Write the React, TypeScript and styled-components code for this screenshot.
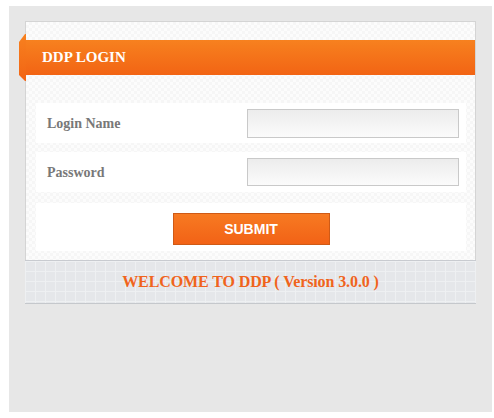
import React from "react";
import styled, { createGlobalStyle } from "styled-components";

const Global = createGlobalStyle`
  html, body { margin: 0; padding: 0; background: #ffffff; }
  body { font-family: "Liberation Serif", "Times New Roman", serif; }
`;

const Page = styled.div`
  padding: 6px 0 0 9px;
`;

const Backdrop = styled.div`
  width: 483px;
  height: 406px;
  background: #e7e7e7;
  padding: 15px 0 0 16px;
  box-sizing: border-box;
`;

const Panel = styled.div`
  width: 451px;
  box-sizing: border-box;
  border: 1px solid #d4d4d4;
  border-bottom: none;
  background-color: #fcfcfc;
  background-image:
    linear-gradient(45deg, #f6f6f6 25%, transparent 25%, transparent 75%, #f6f6f6 75%),
    linear-gradient(45deg, #f6f6f6 25%, transparent 25%, transparent 75%, #f6f6f6 75%);
  background-size: 6px 6px;
  background-position: 0 0, 3px 3px;
  padding-top: 18px;
`;

const Header = styled.div`
  position: relative;
  height: 35px;
  display: flex;
  align-items: center;
  padding-left: 16px;
  background: linear-gradient(#f7811f, #f26414);
  color: #ffffff;
  font-weight: bold;
  font-size: 15px;
  &::before {
    content: "";
    position: absolute;
    left: -7px;
    top: -6px;
    width: 7px;
    height: 47px;
    background: linear-gradient(#f7811f, #f26414);
    clip-path: polygon(0 8px, 6px 0, 7px 0, 7px 100%, 6px 100%, 0 calc(100% - 6px));
  }
`;

const Form = styled.div`
  display: flex;
  flex-direction: column;
  padding: 28px 9px 0 10px;
`;

const Row = styled.div<{ $h: number; $gap: number }>`
  height: ${(p) => p.$h}px;
  margin-bottom: ${(p) => p.$gap}px;
  background: #ffffff;
  display: flex;
  align-items: center;
  justify-content: space-between;
  padding: 0 7px 0 11px;
`;

const ButtonRow = styled(Row)`
  justify-content: center;
  align-items: flex-start;
  padding: 10px 0 0 0;
  box-sizing: border-box;
`;

const Label = styled.label`
  font-weight: bold;
  font-size: 14px;
  color: #787878;
  padding-top: 2px;
`;

const Input = styled.input<{ $h: number }>`
  width: 212px;
  height: ${(p) => p.$h}px;
  box-sizing: border-box;
  border: 1px solid #c9c9c9;
  background: linear-gradient(#ececec, #fbfbfb);
  outline: none;
  padding: 0 4px;
`;

const Submit = styled.button`
  width: 157px;
  height: 32px;
  box-sizing: border-box;
  border: 1px solid #cf5a16;
  background: linear-gradient(#f77a22, #f26216);
  color: #ffffff;
  font-family: "Liberation Sans", Arial, sans-serif;
  font-weight: bold;
  font-size: 14px;
  cursor: pointer;
  padding: 0;
`;

const Footer = styled.div`
  margin: 0 -1px;
  height: 44px;
  box-sizing: border-box;
  border-top: 1px solid #c8cbd0;
  border-bottom: 1px solid #c5c8cc;
  background-color: #e5e7ea;
  background-image:
    linear-gradient(90deg, #eef0f2 1px, transparent 1px),
    linear-gradient(#eef0f2 1px, transparent 1px);
  background-size: 10px 10px;
  display: flex;
  align-items: center;
  justify-content: center;
  color: #f0641c;
  font-weight: bold;
  font-size: 16px;
  letter-spacing: -0.1px;
`;

export default function App() {
  return (
    <>
      <Global />
      <Page>
        <Backdrop>
          <Panel>
            <Header>DDP LOGIN</Header>
            <Form>
              <Row $h={40} $gap={9}>
                <Label>Login Name</Label>
                <Input $h={29} type="text" />
              </Row>
              <Row $h={40} $gap={11}>
                <Label>Password</Label>
                <Input $h={28} type="password" />
              </Row>
              <ButtonRow $h={48} $gap={9}>
                <Submit>SUBMIT</Submit>
              </ButtonRow>
            </Form>
            <Footer>WELCOME TO DDP ( Version 3.0.0 )</Footer>
          </Panel>
        </Backdrop>
      </Page>
    </>
  );
}
